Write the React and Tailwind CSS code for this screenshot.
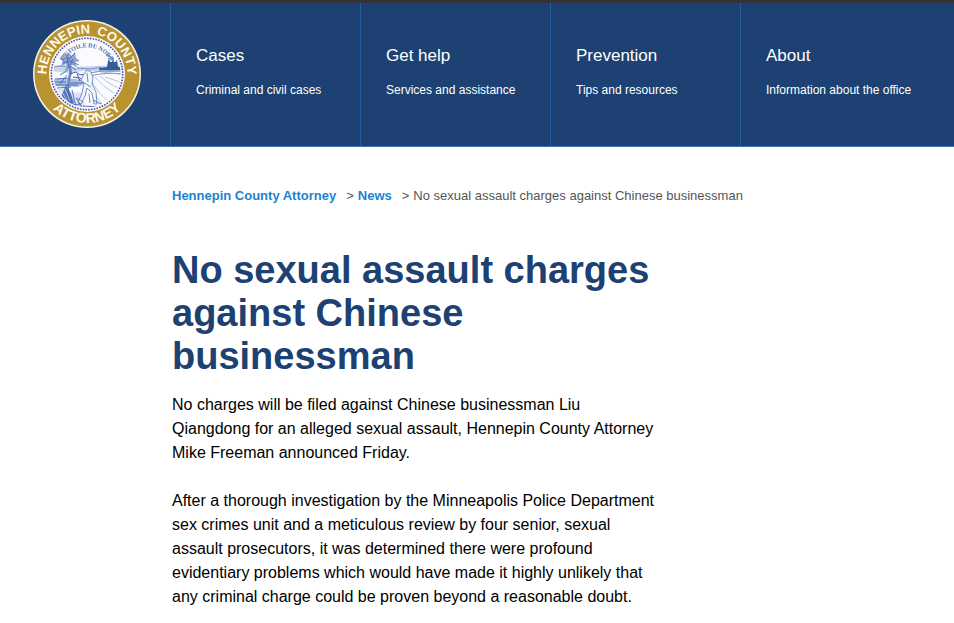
const sections = [
  { title: 'Cases', text: 'Criminal and civil cases' },
  { title: 'Get help', text: 'Services and assistance' },
  { title: 'Prevention', text: 'Tips and resources' },
  { title: 'About', text: 'Information about the office' },
]

function Seal() {
  return (
    <svg viewBox="0 0 108 108" className="h-[108px] w-[108px]" role="img" aria-label="Hennepin County Attorney">
      <defs>
        <path id="seal-top" d="M13.5 54a40.5 40.5 0 0 1 81 0" />
        <path id="seal-bottom" d="M5 54a49 49 0 0 0 98 0" />
        <path id="seal-motto" d="M29 44a27 27 0 0 1 50 0" />
        <clipPath id="seal-clip">
          <circle cx="54" cy="54" r="33.5" />
        </clipPath>
      </defs>
      <circle cx="54" cy="54" r="54" fill="#f6f1e4" />
      <circle cx="54" cy="54" r="52.5" fill="#b8932f" />
      <circle cx="54" cy="54" r="38" fill="#fbfbfd" />
      <circle cx="54" cy="54" r="35.7" fill="none" stroke="#4a4fa3" strokeWidth="1.6" strokeDasharray="1.6 1.2" />

      {/* Landscape in the middle of the seal */}
      <g clipPath="url(#seal-clip)" fill="none">
        <path d="M18 47c8-3 14-2 22 0l22-1 28-1v5l-20 2-20-1-16 2-16-2z" fill="#c9d5ec" />
        <path d="M18 48c8-3 14-2 19 0M44 48l14 1 10-2M58 53c8-2 18-3 30-2M58 56c10-3 20-3 32-2" stroke="#6d87c0" strokeWidth=".9" />
        <path d="M74 47l1-6 1-2 1 3h2l1-4 1 4h2l1-3 1 8h5v3H66v-2z" fill="#355a9e" />
        <path d="M68 52l20-1M66 50l8 3 16 1" stroke="#8aa3d2" strokeWidth="1.2" />
        <path d="M19 60c10-2 18-2 30 0l4 3-8 4-24-1z" fill="#a9bcdf" />
        <path d="M19 62h14M36 63h14M21 65h24M22 59l14-1M24 68l14-1" stroke="#4166ab" strokeWidth=".9" />
        <path d="M20 70l12-2 6 4 12 1 2 16H38c-9-3-15-9-18-19z" fill="#dbe3f2" />
        <path d="M62 57c7 8 16 15 23 18M67 56c7 6 14 11 22 13M59 62c5 9 11 15 18 21M72 57l18 6M58 69l13 18" stroke="#b5c4e2" strokeWidth="1" />
        {/* Tree */}
        <path d="M35 38l1 14-2 14h2l3-14-2-14z" fill="#6d87c0" />
        <path d="M29 35l4 2 2-5 4 4 3-4 1 6 4 3-5 1 2 5-5-2-4 5-2-6-5 2 2-5-3-3z" fill="#8da4d3" />
        <path d="M30 34l6 5 6-6M29 43l8-2 9 4M32 50l5-4 6 4M27 55l8-5M27 64l7-9M34 37l2 10M40 39l-3 6" stroke="#3a60a8" strokeWidth=".8" />
        {/* Rider, farmer and plough */}
        <path d="M37 54l6-2 4 3 6-1M40 57l7 1 5 3M44 54l3 7" stroke="#3a60a8" strokeWidth="1" />
        <path d="M54 50l4 2 2 5-1 7 4 8 1 12h-3l-2-11-5-5-2 8-4 8-3-1 4-10 2-9-3-4 3-6z" fill="#f3f6fb" stroke="#6681bf" strokeWidth=".9" />
        <path d="M54 53l1 9M50 62l8 5M44 78l6 4M56 74l1 9" stroke="#4d6fb3" strokeWidth=".8" />
        <path d="M33 65l-6 14 10 6 4-2-3-9z" fill="#5573b5" />
        <path d="M22 70l5 6M35 64l2 20M39 70l4 17M24 76l13 9M38 84l10 1M43 78l6 9M50 86l16 1M60 80l10 5" stroke="#4166ab" strokeWidth=".9" />
        <path d="M29 72l6 10M32 69l5 12" stroke="#dbe3f2" strokeWidth=".7" />
      </g>

      <text fill="#4a67a8" className="font-['Liberation_Serif',serif] text-[6px] font-bold" textAnchor="middle">
        <textPath href="#seal-motto" startOffset="50%">L'ETOILE DU NORD</textPath>
      </text>
      <path d="M73 35l7 3M75 39l6-1" stroke="#6d87c0" strokeWidth="1" />
      <g fill="#fdfaf0" textAnchor="middle" className="text-[13px] font-bold">
        <text>
          <textPath href="#seal-top" startOffset="26%">HENNEPIN</textPath>
        </text>
        <text>
          <textPath href="#seal-top" startOffset="79%">COUNTY</textPath>
        </text>
        <text className="text-[14px]">
          <textPath href="#seal-bottom" startOffset="50%">ATTORNEY</textPath>
        </text>
      </g>
    </svg>
  )
}

export default function App() {
  return (
    <div className="min-h-screen bg-white font-['Liberation_Sans',Arial,sans-serif] text-black">
      <header className="flex border-t-[3px] border-b border-t-[#333338] border-b-[#3a74ab] bg-[#1c4172] text-white">
        <a href="#home" className="flex w-[170px] shrink-0 justify-center pt-[17px] pl-1">
          <Seal />
        </a>
        <nav className="flex grow">
          {sections.map((section) => (
            <a
              key={section.title}
              href="#section"
              className="min-w-[190px] border-l border-[#205f9c] pt-[41px] pb-[46px] pl-[25px] last:grow"
            >
              <span className="block text-[17px] leading-6">{section.title}</span>
              <span className="mt-3 block text-xs leading-5">{section.text}</span>
            </a>
          ))}
        </nav>
      </header>

      <main className="pr-6 pl-[172px]">
        <nav aria-label="Breadcrumb" className="pt-[39px] text-[13px] leading-5 text-[#555555]">
          <ol className="flex flex-wrap">
            <li>
              <a href="#home" className="font-bold text-[#1b82d1]">Hennepin County Attorney</a>
            </li>
            <li>
              <span className="mr-1 ml-[10px]">&gt;</span>
              <a href="#news" className="font-bold text-[#1b82d1]">News</a>
            </li>
            <li>
              <span className="mr-1 ml-[10px]">&gt;</span>
              <span aria-current="page">No sexual assault charges against Chinese businessman</span>
            </li>
          </ol>
        </nav>

        <article className="max-w-[490px]">
          <h1 className="mt-[43px] text-[38px] leading-[43px] font-bold text-[#1c4172]">
            No sexual assault charges against Chinese businessman
          </h1>
          <p className="mt-[15px] text-base leading-6">
            No charges will be filed against Chinese businessman Liu Qiangdong for an alleged sexual assault, Hennepin
            County Attorney Mike Freeman announced Friday.
          </p>
          <p className="mt-6 text-base leading-6">
            After a thorough investigation by the Minneapolis Police Department sex crimes unit and a meticulous review
            by four senior, sexual assault prosecutors, it was determined there were profound evidentiary problems which
            would have made it highly unlikely that any criminal charge could be proven beyond a reasonable doubt.
          </p>
        </article>
      </main>
    </div>
  )
}
